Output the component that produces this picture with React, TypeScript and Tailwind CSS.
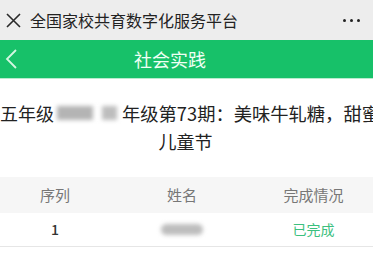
import React from "react";

export default function App() {
  const font = { fontFamily: '"Noto Sans CJK SC", "Noto Sans", sans-serif' };
  return (
    <div className="w-[373px] h-[254px] overflow-hidden bg-white" style={font}>
      {/* top bar */}
      <div className="h-[40px] bg-[#ededed] flex items-center relative">
        <svg className="ml-[5px]" width="17" height="17" viewBox="0 0 17 17">
          <path d="M2 2 L15 15 M15 2 L2 15" stroke="#2a2a2a" strokeWidth="1.6" fill="none" />
        </svg>
        <span className="ml-[8px] text-[16px] text-[#222] leading-none">全国家校共育数字化服务平台</span>
        <div className="ml-auto mr-[13px] flex gap-[4px]">
          <span className="w-[3px] h-[3px] rounded-full bg-[#222]" />
          <span className="w-[3px] h-[3px] rounded-full bg-[#222]" />
          <span className="w-[3px] h-[3px] rounded-full bg-[#222]" />
        </div>
      </div>
      {/* green bar */}
      <div className="h-[39px] bg-[#17c169] border-b border-[#b9ecce] flex items-center relative">
        <svg className="ml-[5px]" width="13" height="22" viewBox="0 0 13 22">
          <path d="M11 2 L2 11 L11 20" stroke="#d4f7e1" strokeWidth="1.8" fill="none" />
        </svg>
        <span className="absolute left-[134px] text-[18px] text-[#effff4] leading-none">社会实践</span>
      </div>
      {/* title */}
      <div className="pt-[20px] text-[18px] leading-[28px] text-[#222]">
        <div className="whitespace-nowrap overflow-hidden flex">
          <span>五年级</span>
          <span className="w-[68px] shrink-0 flex items-center gap-[9px] pl-[3px]">
            <span className="w-[36px] h-[14px] bg-[#b4b4b4] blur-[2px]" />
            <span className="w-[15px] h-[14px] bg-[#bdbdbd] blur-[2px]" />
          </span>
          <span className="text-[18.3px]">年级第73期：美味牛轧糖，甜蜜</span>
        </div>
        <div className="text-center ml-[-2px]">儿童节</div>
      </div>
      {/* table */}
      <div className="mt-[22px]">
        <div className="grid grid-cols-[110px_144px_1fr] h-[36px] items-center bg-[#f6f6f6] text-[15px] text-[#777]">
          <div className="text-center">序列</div>
          <div className="text-center">姓名</div>
          <div className="text-center">完成情况</div>
        </div>
        <div className="grid grid-cols-[110px_144px_1fr] h-[34px] items-center border-b border-[#e6e6e6] text-[14px]">
          <div className="text-center text-[#333] font-medium">1</div>
          <div className="flex justify-center">
            <span className="w-[42px] h-[11px] bg-[#bdbdbd] blur-[2px] rounded-full" />
          </div>
          <div className="text-center text-[#3cc07e]">已完成</div>
        </div>
      </div>
    </div>
  );
}
